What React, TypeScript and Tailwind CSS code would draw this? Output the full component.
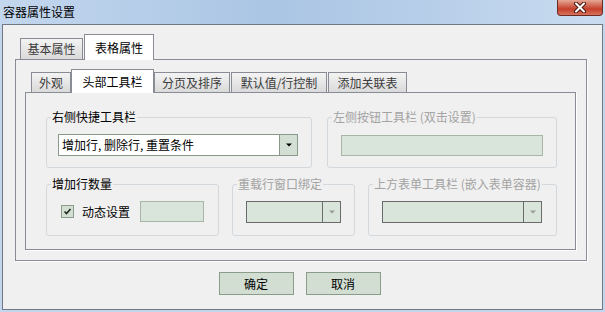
import type { ReactNode } from "react";

const font = "font-['Noto_Sans_CJK_SC','Noto_Sans',sans-serif]";

const Group = ({
  label,
  disabled,
  className,
  children,
}: {
  label: string;
  disabled?: boolean;
  className: string;
  children: ReactNode;
}) => (
  <fieldset className={`rounded-[3px] border border-[#d3d8dc] ${className}`}>
    <legend
      className={`ml-[4px] px-[1px] text-[12px] leading-[14px] ${
        disabled ? "text-[#a3a3a3]" : "text-black"
      }`}
    >
      {label}
    </legend>
    {children}
  </fieldset>
);

const Combo = ({ w, text, disabled }: { w: string; text?: string; disabled?: boolean }) => (
  <div
    className={`flex h-[22px] border ${w} ${
      disabled ? "border-[#6b6b6b] bg-[#d9e4da]" : "border-[#8a9a8a] bg-white"
    }`}
  >
    <div className="flex-1 pl-[3px] text-[12px] leading-[20px] text-black whitespace-nowrap">{text}</div>
    <div
      className={`flex w-[18px] items-center justify-center border-l ${
        disabled ? "border-[#6b6b6b]" : "border-[#8a9a8a] bg-[#d3dfd3]"
      }`}
    >
      <svg width="6" height="4" viewBox="0 0 6 4">
        <path d="M0 0.5h6L3 3.5z" fill={disabled ? "#9a9a9a" : "#000"} />
      </svg>
    </div>
  </div>
);

const OuterTab = ({ label, active, className }: { label: string; active?: boolean; className: string }) =>
  active ? (
    <div className={`flex h-[26px] items-center justify-center border border-b-0 border-[#898c95] bg-white text-[12px] text-black ${className}`}>
      {label}
    </div>
  ) : (
    <div
      className={`mb-px flex h-[21px] items-center justify-center border border-b-0 border-[#898c95] bg-[linear-gradient(#f3f3f3,#dadada)] text-[12px] text-[#3c3c3c] ${className}`}
    >
      {label}
    </div>
  );

const InnerTab = ({ label, active, className }: { label: string; active?: boolean; className: string }) =>
  active ? (
    <div className={`flex h-[24px] items-center justify-center border border-b-0 border-[#898c95] bg-white text-[12px] text-black ${className}`}>
      {label}
    </div>
  ) : (
    <div
      className={`mb-px flex h-[20px] items-center justify-center border border-b-0 border-[#898c95] bg-[linear-gradient(#f3f3f3,#dadada)] text-[12px] text-[#3c3c3c] ${className}`}
    >
      {label}
    </div>
  );

export default function App() {
  return (
    <div className={`flex h-[312px] w-[605px] flex-col bg-[#c3d6ec] ${font}`}>
      {/* title bar */}
      <div className="flex h-[24px] items-start justify-between bg-[linear-gradient(90deg,#c3d7ee,#aac5e4_45%,#b7cee9_70%,#c9dcf0)]">
        <span className="pl-[3px] pt-[5px] text-[12px] leading-[14px] text-black">容器属性设置</span>
        <div className="mr-[2px] flex h-[16px] w-[46px] items-center justify-center rounded-b-[4px] border border-t-0 border-[#6d2b22] bg-[linear-gradient(#e6a796,#c9513d_50%,#c4402c_60%,#d7735d)]">
          <svg width="14" height="11" viewBox="0 0 14 11">
            <path d="M3 1.5l8 8M11 1.5l-8 8" stroke="#4a1a14" strokeWidth="4" strokeLinecap="round" />
            <path d="M3 1.5l8 8M11 1.5l-8 8" stroke="#fff" strokeWidth="2" strokeLinecap="round" />
          </svg>
        </div>
      </div>

      {/* client area */}
      <div className="ml-[2px] flex h-[286px] w-[601px] flex-col border border-[#6f7884] bg-[#f0f0f0]">
        <div className="ml-[12px] pt-[9px]">
          <div className="relative z-10 -mb-px flex items-end">
            <OuterTab label="基本属性" className="ml-[5px] w-[63px]" />
            <OuterTab label="表格属性" active className="ml-px w-[70px]" />
          </div>

          <div className="h-[202px] w-[572px] border border-[#898c95] bg-[#f0f0f0] shadow-[1px_1px_0_#ffffff]">
            <div className="ml-[9px] pt-[9px]">
              <div className="relative z-10 -mb-px flex items-end">
                <InnerTab label="外观" className="ml-[6px] w-[40px]" />
                <InnerTab label="头部工具栏" active className="w-[83px]" />
                <InnerTab label="分页及排序" className="w-[76px]" />
                <InnerTab label="默认值/行控制" className="ml-px w-[96px]" />
                <InnerTab label="添加关联表" className="ml-px w-[79px]" />
              </div>

              <div className="flex h-[158px] w-[551px] flex-col gap-[9px] border border-[#898c95] bg-[#f0f0f0] pl-[20px] pt-[17px] shadow-[1px_1px_0_#ffffff]">
                <div className="flex gap-[15px]">
                  <Group label="右侧快捷工具栏" className="w-[266px]">
                    <div className="pb-[11px] pl-[11px] pt-[10px]">
                      <Combo w="w-[240px]" text="增加行, 删除行, 重置条件" />
                    </div>
                  </Group>
                  <Group label="左侧按钮工具栏 (双击设置)" disabled className="w-[230px]">
                    <div className="pb-[11px] pl-[13px] pt-[11px]">
                      <div className="h-[21px] w-[202px] border border-[#a6b6a7] bg-[#d9e4da]" />
                    </div>
                  </Group>
                </div>

                <div className="flex gap-[13px]">
                  <Group label="增加行数量" className="w-[173px]">
                    <div className="flex items-center pb-[12px] pl-[14px] pt-[10px]">
                      <div className="flex h-[13px] w-[13px] items-center justify-center border border-[#8c9b8c] bg-[#d4dfd4]">
                        <svg width="9" height="9" viewBox="0 0 9 9">
                          <path d="M1.5 4.5l2 2 4-4.5" stroke="#1d2a1d" strokeWidth="1.6" fill="none" />
                        </svg>
                      </div>
                      <span className="ml-[8px] text-[12px] leading-[14px] text-black">动态设置</span>
                      <div className="ml-[10px] h-[21px] w-[64px] border border-[#a6b6a7] bg-[#d9e4da]" />
                    </div>
                  </Group>
                  <Group label="重载行窗口绑定" disabled className="w-[123px]">
                    <div className="pb-[12px] pl-[13px] pt-[10px]">
                      <Combo w="w-[95px]" disabled />
                    </div>
                  </Group>
                  <Group label="上方表单工具栏 (嵌入表单容器)" disabled className="w-[189px]">
                    <div className="pb-[12px] pl-[13px] pt-[10px]">
                      <Combo w="w-[160px]" disabled />
                    </div>
                  </Group>
                </div>
              </div>
            </div>
          </div>
        </div>

        <div className="mt-[11px] flex justify-center gap-[12px] pr-[6px]">
          <button className="h-[23px] w-[75px] border border-[#8a9c8a] bg-[#d2ded2] text-[12px] text-black">确定</button>
          <button className="h-[23px] w-[75px] border border-[#8a9c8a] bg-[#d2ded2] text-[12px] text-black">取消</button>
        </div>
      </div>
    </div>
  );
}
